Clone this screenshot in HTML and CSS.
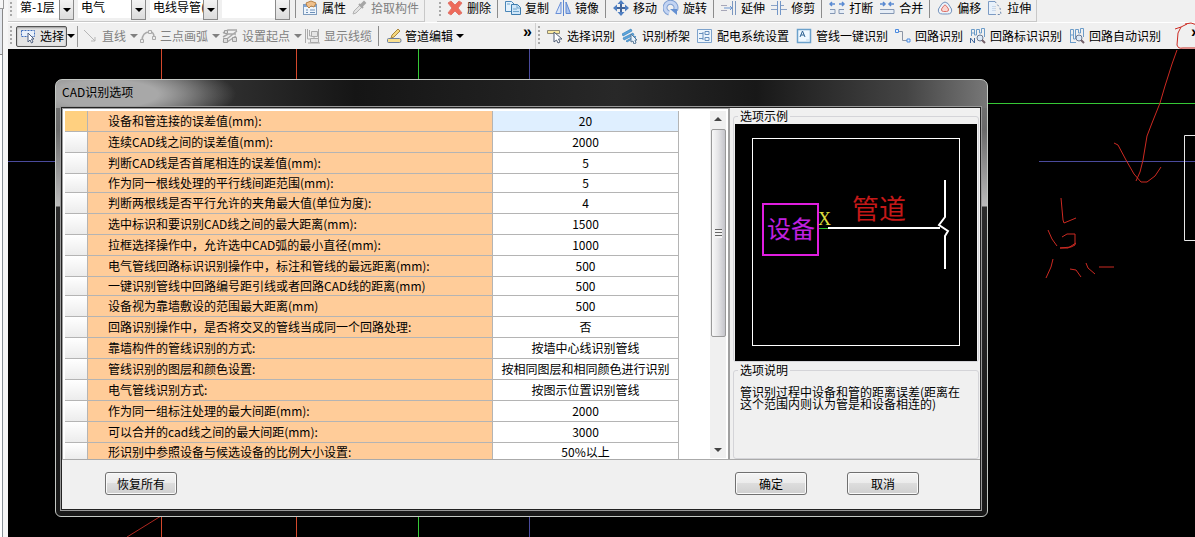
FILE: index.html
```html
<!DOCTYPE html>
<html lang="zh-CN">
<head>
<meta charset="utf-8">
<title>CAD识别选项</title>
<link rel="stylesheet" href="styles.css">
</head>
<body>
<div class="app">
  <aside class="dock"><div class="dock-top"></div><div class="dock-tab"></div><div class="dock-body"></div></aside>
  <div class="main">
    <div class="toolbars">
      <div class="row row-first">
        <div class="bar bar-props">
          <span class="grip"></span>
          <div class="combos">
            <span class="combo combo-small"><select aria-label="楼层"><option>第-1层</option></select></span>
            <span class="combo"><select aria-label="专业"><option>电气</option></select></span>
            <span class="combo"><select aria-label="构件类型"><option>电线导管(电)</option></select></span>
            <span class="combo"><select aria-label="构件"><option></option></select></span>
          </div>
          <span class="sep"></span>
          <button class="tool"><svg class="icon" viewBox="0 0 16 16"><rect x="1.500" y="4.500" width="13" height="10" fill="#eef5fc" stroke="#7f9cbd"/><path d="M2 6h12" stroke="#7fa6d8" stroke-width="2"/><path d="M4 10h2M8 10h5M4 12.500h2M8 12.500h5" stroke="#6c8fb8"/><path d="M4 3l5-2 5 2-2 4-3-1-2 2-2-2z" fill="#efc08c" stroke="#b98448"/></svg>属性</button>
          <button class="tool" disabled><svg class="icon" viewBox="0 0 16 16"><path d="M2 14l1-3 6-6 2 2-6 6z" fill="#e2e2e2" stroke="#b2b2b2"/><path d="M8 4l4 4M10 5l3-3 1 1-3 3" stroke="#a6a6a6" stroke-width="2" fill="none"/></svg>拾取构件</button>
        </div>
        <div class="bar bar-edit">
          <span class="grip"></span>
          <button class="tool"><svg class="icon" viewBox="0 0 16 16"><path d="M1 3l3-2 4 4 4-4 3 2-4 5 4 5-3 2-4-4-4 4-3-2 4-5z" fill="#ee6a5a" stroke="#e0766c"/></svg>删除</button>
          <span class="sep"></span>
          <button class="tool"><svg class="icon" viewBox="0 0 16 16"><path d="M.5 1.500h6l3 3v7h-9z" fill="#e3f1fc" stroke="#4a86b8"/><path d="M6.500 4.500h6l3 3v7h-9z" fill="#cfe6f8" stroke="#3d7cae"/><path d="M12 5v3h3M8 9h4M8 11.500h6M2 4h3" stroke="#6ea4cc" fill="none"/></svg>复制</button>
          <button class="tool"><svg class="icon" viewBox="0 0 16 16"><path d="M8.500 0v16" stroke="#5b86d0"/><path d="M6 2v11.500H.8z" fill="#d9e6fa" stroke="#6a90d8"/><path d="M11 2v11.500h4.500z" fill="#a9c3ee" stroke="#5f88d2"/></svg>镜像</button>
          <span class="sep"></span>
          <button class="tool"><svg class="icon" viewBox="0 0 16 16"><path d="M8 1v14M1 8h14" stroke="#41659c" stroke-width="2"/><path d="M8 0l3.500 4h-7zM8 16l3.500-4h-7zM0 8l4-3.500v7zM16 8l-4-3.500v7z" fill="#4f7fc2"/></svg>移动</button>
          <button class="tool"><svg class="icon" viewBox="0 0 16 16"><path d="M6 13A5.500 5.500 0 1 1 12.500 10" stroke="#7f9fd2" stroke-width="5" fill="none"/><path d="M6 13A5.500 5.500 0 1 1 12.500 10" stroke="#c3d4f2" stroke-width="3" fill="none"/><path d="M7 9h7v6z" fill="#6490d2"/></svg>旋转</button>
          <span class="sep"></span>
          <button class="tool"><svg class="icon" viewBox="0 0 16 16"><path d="M0 5.500h6M0 10.500h6" stroke="#a7a7b8"/><path d="M3 8h8M9 6l2 2-2 2" stroke="#6d97d2" fill="none"/><path d="M11.500 1v14M14.500 1v14" stroke="#7b97c0"/></svg>延伸</button>
          <button class="tool"><svg class="icon" viewBox="0 0 16 16"><path d="M6.500 1v14M9.500 1v14" stroke="#7296c8"/><path d="M0 5.500h6M0 9.500h6M10 5.500h3M10 9.500h6" stroke="#8aa2c6"/></svg>修剪</button>
          <span class="sep"></span>
          <button class="tool"><svg class="icon" viewBox="0 0 16 16"><path d="M1 4h5M3 2L1 4l2 2M10 4h5M13 2l2 2-2 2" stroke="#5a8ad2" stroke-width="1.500" fill="none"/><path d="M1 9.500h5v4H1M15 9.500h-5v4h5" stroke="#8497b4" fill="#e6edf6"/></svg>打断</button>
          <button class="tool"><svg class="icon" viewBox="0 0 16 16"><path d="M1 4h5M4 2l2 2-2 2M10 4h5M12 2l-2 2 2 2" stroke="#5a8ad2" stroke-width="1.500" fill="none"/><path d="M1 9.500h14v4H1" stroke="#8497b4" fill="#e6edf6"/></svg>合并</button>
          <span class="sep"></span>
          <button class="tool"><svg class="icon" viewBox="0 0 16 16"><path d="M1.500 9L5 3.500Q8 .5 11 3.500L14.500 9q1 5-4 5h-5q-5 0-4-5z" fill="#edf3fa" stroke="#7493bd"/><path d="M4.500 9L7 5.500q1-1 2 0L11.500 9q.5 2.500-2 2.500h-3q-2.500 0-2-2.500z" fill="#f9d6d2" stroke="#dd7168"/></svg>偏移</button>
          <button class="tool"><svg class="icon" viewBox="0 0 16 16"><path d="M8 14.500H1.500v-13H8" fill="#e8f1fb" stroke="#7c9bc4"/><path d="M8 1.500L13 8l1 6.500H8" fill="none" stroke="#6b86ad" stroke-dasharray="2 2"/><path d="M6 6v5M8 6v5" stroke="#a9bdd8" stroke-dasharray="1 1"/></svg>拉伸</button>
        </div>
      </div>
      <div class="row row-second">
        <div class="bar bar-draw">
          <span class="grip"></span>
          <div class="select-group">
            <button class="tool tool-pressed"><svg class="icon" viewBox="0 0 16 16"><path d="M1.500 2.500h13v6h-13z" fill="#e8f0fb" stroke="#3f6fbd" stroke-dasharray="2 1"/><path d="M8 5v9l2-2 1.500 3 1.500-1-1.500-3H14z" fill="#fff" stroke="#4d5f80"/></svg>选择</button>
            <button class="drop" aria-label="选择方式"></button>
          </div>
          <div class="draw-group">
            <button class="tool" disabled><svg class="icon" viewBox="0 0 16 16"><path d="M2 2l11 11M9 13h4V9" stroke="#b5b5b5" fill="none"/></svg>直线<i class="arrow"></i></button>
            <button class="tool" disabled><svg class="icon" viewBox="0 0 16 16"><path d="M2 13Q2 4 10 4q4 0 4 5" stroke="#aaa" fill="none" stroke-width="1.500"/><path d="M.5 11.500h3v3h-3zM8.500 2.500h3v3h-3zM12.500 8.500h3v3h-3z" fill="#ededed" stroke="#aaa"/></svg>三点画弧<i class="arrow"></i></button>
            <button class="tool" disabled><svg class="icon" viewBox="0 0 16 16"><path d="M1 5l5-3h9M1 9l5-3h8M1 14L15 3M5 14l9-6" stroke="#a8a8a8" stroke-width="1.500" fill="none"/><path d="M1.500 10.500h4v4h-4zM10.500 9.500h4v4h-4zM2.500 2.500h3v3h-3z" fill="#ddd" stroke="#9d9d9d"/></svg>设置起点<i class="arrow"></i></button>
            <button class="tool" disabled><svg class="icon" viewBox="0 0 16 16"><path d="M1.500 1v14M3.500 1v10h4M5.500 2v6h3" stroke="#aaa" fill="none"/><path d="M7.500 3.500h6v5h-6zM6.500 10.500h8v4h-8zM10 8v3M4 15h12M14.500 1v10" fill="#e5e5e5" stroke="#aaa"/></svg>显示线缆</button>
          </div>
          <span class="sep"></span>
          <button class="tool tool-tight"><svg class="icon" viewBox="0 0 16 16"><path d="M1.500 11.500q0-1 1-1h11q1.500 0 1.500 2t-1.500 2h-11q-1 0-1-1z" fill="#f8df8e" stroke="#6b7fa0"/><path d="M5 10l1-3 6-6 2 2-6 6z" fill="#f5d77c" stroke="#a98640"/></svg>管道编辑<i class="arrow"></i></button>
          <button class="more">»</button>
        </div>
        <div class="bar bar-detect">
          <span class="grip"></span>
          <button class="tool"><svg class="icon" viewBox="0 0 16 16"><path d="M.5 2.500h12v3H.5z" fill="#fae9a0" stroke="#8f8a76"/><path d="M7 4v10l2.500-2 1.500 3 2-1-1.500-3H15z" fill="#fff" stroke="#4f5d74"/></svg>选择识别</button>
          <button class="tool"><svg class="icon" viewBox="0 0 16 16"><path d="M0 6l9-5 1 2-9 5zM1 10l10-5 1 2-10 5zM4 13l9-5 1 1-9 5z" fill="#5ba5dc" stroke="#3b83bd" stroke-width=".7"/><path d="M9 6v8l2-1 1 3 2-1-1-3h2z" fill="#e8f3fc" stroke="#587998"/></svg>识别桥架</button>
          <button class="tool"><svg class="icon" viewBox="0 0 16 16"><path d="M.5 1.500h14v13H.5z" fill="#edf5fc" stroke="#7da2cc"/><path d="M2 5.500h4M2 10.500h4M8 3.500h4v3H8zM8 9.500h4v3H8zM6 4v8" stroke="#668fbd" fill="none"/></svg>配电系统设置</button>
          <button class="tool"><svg class="icon" viewBox="0 0 16 16"><path d="M1.500 1.500h13v13h-13z" fill="#eff8ff" stroke="#6ba1cb" stroke-width="1.500"/><path d="M4 9l2.500-6L9 9M5 7h3" stroke="#2e6292" fill="none"/><path d="M10 12h3" stroke="#c8dced"/></svg>管线一键识别</button>
          <button class="tool"><svg class="icon" viewBox="0 0 16 16"><path d="M3 3.500h4.500v9H13" stroke="#8b95a5" fill="none"/><path d="M.5 1.500h3v3h-3zM12 11h3v3h-3z" fill="#e9f2ff" stroke="#4b8be0"/></svg>回路识别</button>
          <button class="tool"><svg class="icon" viewBox="0 0 16 16"><path d="M1.500 8V1.500h3V7h2V1.500h3V5h2V.5h3V9M1 5h4" stroke="#6c9cc9" fill="none"/><path d="M.5 15v-5l4 5v-5" stroke="#41679a" fill="none"/><circle cx="10" cy="10" r="3" fill="#dceaf8" stroke="#6b7890"/><path d="M12 12l3 3" stroke="#725f68" stroke-width="2"/></svg>回路标识识别</button>
          <button class="tool"><svg class="icon" viewBox="0 0 16 16"><path d="M1.500 15V1.500h3V11h2V1.500h3V5h2V.500h3V9M1 7h4M1 14.500h6" stroke="#6c9cc9" fill="none"/><circle cx="10" cy="10" r="3" fill="#dceaf8" stroke="#6b7890"/><path d="M12 12l3 3" stroke="#725f68" stroke-width="2"/></svg>回路自动识别</button>
          <button class="more more-edge">»</button>
        </div>
      </div>
    </div>

    <div class="canvas">
      <svg class="drawing" aria-hidden="true">
        <path d="M153.500 0v488M288.500 0v488" stroke="#d4482c"/>
        <path d="M119 488l34-21" stroke="#b02820"/>
        <path d="M410.500 0v488M410 54.500h800" stroke="#36c836"/>
        <path d="M521.500 0v488M0 112.500h60M1031 112.500h400" stroke="#4a4a9c"/>
        <path d="M1300 86.500h-123.500v105H1300" stroke="#e8e8e8" fill="none"/>
      </svg>

      <section class="dialog" role="dialog" aria-labelledby="dlg-title">
        <h1 class="dialog-title" id="dlg-title">CAD识别选项</h1>
        <div class="dialog-client">
          <div class="panels">
            <div class="list-panel">
              <table class="options">
                <colgroup><col class="col-head"><col class="col-name"><col class="col-value"></colgroup>
                <tbody>
                <tr class="current"><th></th><td>设备和管连接的误差值(mm):</td><td>20</td></tr>
                <tr><th></th><td>连续CAD线之间的误差值(mm):</td><td>2000</td></tr>
                <tr><th></th><td>判断CAD线是否首尾相连的误差值(mm):</td><td>5</td></tr>
                <tr class="short"><th></th><td>作为同一根线处理的平行线间距范围(mm):</td><td>5</td></tr>
                <tr><th></th><td>判断两根线是否平行允许的夹角最大值(单位为度):</td><td>4</td></tr>
                <tr><th></th><td>选中标识和要识别CAD线之间的最大距离(mm):</td><td>1500</td></tr>
                <tr><th></th><td>拉框选择操作中，允许选中CAD弧的最小直径(mm):</td><td>1000</td></tr>
                <tr><th></th><td>电气管线回路标识识别操作中，标注和管线的最远距离(mm):</td><td>500</td></tr>
                <tr class="short"><th></th><td>一键识别管线中回路编号距引线或者回路CAD线的距离(mm)</td><td>500</td></tr>
                <tr><th></th><td>设备视为靠墙敷设的范围最大距离(mm)</td><td>500</td></tr>
                <tr><th></th><td>回路识别操作中，是否将交叉的管线当成同一个回路处理:</td><td>否</td></tr>
                <tr><th></th><td>靠墙构件的管线识别的方式:</td><td>按墙中心线识别管线</td></tr>
                <tr><th></th><td>管线识别的图层和颜色设置:</td><td>按相同图层和相同颜色进行识别</td></tr>
                <tr><th></th><td>电气管线识别方式:</td><td>按图示位置识别管线</td></tr>
                <tr><th></th><td>作为同一组标注处理的最大间距(mm):</td><td>2000</td></tr>
                <tr><th></th><td>可以合并的cad线之间的最大间距(mm):</td><td>3000</td></tr>
                <tr class="last"><th></th><td>形识别中参照设备与候选设备的比例大小设置:</td><td>50%以上</td></tr>
                </tbody>
              </table>
              <div class="scrollbar">
                <i class="tri tri-up"></i>
                <div class="thumb"><i class="thumb-grip"></i></div>
                <i class="tri tri-down"></i>
              </div>
            </div>
            <div class="side-panel">
              <fieldset class="group group-sample">
                <legend>选项示例</legend>
                <svg class="sample" viewBox="0 0 242 237" role="img" aria-label="选项示例">
                  <rect width="242" height="237" fill="#000"/>
                  <rect x="17.500" y="14.500" width="207" height="207" fill="none" stroke="#fff"/>
                  <rect x="28" y="80" width="55" height="51" fill="none" stroke="#e01ee0" stroke-width="2"/>
                  <text class="t-device" x="32" y="114">设备</text>
                  <text class="t-x" x="83" y="101">X</text>
                  <path d="M84 104.500h9" stroke="#2fc02f"/>
                  <path d="M93 104h112" stroke="#fff" stroke-width="2"/>
                  <path d="M210 56v37l-6 8 9 6-3 5v33" fill="none" stroke="#fff" stroke-width="2"/>
                  <text class="t-pipe" x="117" y="95">管道</text>
                </svg>
              </fieldset>
              <fieldset class="group group-note">
                <legend>选项说明</legend>
                <p>管识别过程中设备和管的距离误差(距离在这个范围内则认为管是和设备相连的)</p>
              </fieldset>
            </div>
          </div>
          <div class="actions">
            <button class="btn">恢复所有</button>
            <div class="confirm"><button class="btn">确定</button><button class="btn">取消</button></div>
          </div>
        </div>
      </section>
    </div>
  </div>
  <svg class="ink" aria-hidden="true">
    <path d="M1175 29l6-2M1187 24l-6 3-3 6-1 12q1 4 6 3h20M1185 24l6-1 6 2M1177 50l-5 14-7 22-5 17-8 20-5 13-4 24-3 12-4 9M1114 143l4 2 8 15 8 14 7 8 6 0 8-6 6-9"/>
    <path d="M1061 198l2 22 1 3 12-5M1048 230l4 9 5 7M1062 237l5-3 8 0 0 11-4 2-11 1M1060 248h8l8-5M1053 259l-2 8-5 11M1070 269l6 1 5 7M1086 263l2 5 7 6M1099 267h15"/>
  </svg>
</div>
</body>
</html>
```
FILE: styles.css
```css
* { box-sizing: border-box; }

body {
  margin: 0;
  font: 12px/16px "Noto Sans CJK SC", sans-serif;
  color: #000;
  background: #f0f0f0;
  overflow: hidden;
}

button, select { font: inherit; color: inherit; }

.app { position: relative; display: flex; height: 100vh; }

.dock { display: flex; flex-direction: column; width: 8px; background: #f6f6f6; }
.dock-top { width: 4px; height: 9px; border-right: 1px solid #999; border-bottom: 1px solid #999; }
.dock-tab { width: 3px; height: 46px; border-right: 1px solid #888; border-bottom: 1px solid #888; background: #e4e8ee; }
.dock-body { flex: 1; width: 3px; border-right: 1px solid #8a9298; background: #fff; }

.main { flex: 1; min-width: 0; display: flex; flex-direction: column; }

/* toolbars */
.toolbars { height: 49px; overflow: hidden; background: #f0f0f0; }
.row { display: flex; height: 28px; }
.row-first { margin-top: -6px; gap: 12px; }
.row-second { height: 27px; border-top: 1px solid #fff; }
.bar { display: flex; align-items: center; gap: 6px; padding: 0 5px 0 2px; white-space: nowrap; }
.row-first .bar { border-right: 1px solid #c8c8c8; border-bottom: 1px solid #c8c8c8; }
.row-first .bar-props { gap: 5px; }
.bar-draw { flex: 0 0 528px; gap: 4px; border-right: 1px solid #d0d0d0; padding-right: 3px; }
.bar-draw .sep { margin: 0 2px; }
.bar-detect { flex: 1; min-width: 0; gap: 7px; padding-right: 0; overflow: hidden; }
.grip { width: 2px; height: 20px; background: repeating-linear-gradient(#a8a8a8 0 2px, transparent 2px 4px); }
.sep { width: 2px; height: 20px; border-left: 1px solid #8c8c8c; }

.combos { display: flex; gap: 4px; }
.combo { position: relative; width: 68px; }
.combo-small { width: 57px; }
.combo select {
  display: block;
  width: 100%;
  height: 20px;
  padding: 0 14px 1px 3px;
  border: 0;
  border-radius: 0;
  background: #fff;
  appearance: none;
}
.combo::before {
  content: "";
  position: absolute;
  right: 0;
  top: 0;
  width: 13px;
  height: 20px;
  border: 1px solid #8a8a8a;
  background: linear-gradient(#f4f4f4, #dcdcdc);
  pointer-events: none;
}
.combo::after {
  content: "";
  position: absolute;
  right: 3px;
  top: 10px;
  border: 4px solid transparent;
  border-top-color: #000;
  border-bottom: 0;
  pointer-events: none;
}

.tool {
  display: flex;
  align-items: center;
  gap: 4px;
  padding: 0;
  border: 0;
  background: none;
  white-space: nowrap;
}
.tool:disabled { color: #808080; }
.tool-tight { gap: 3px; }
.icon { width: 16px; height: 16px; flex: none; }
.arrow { border: 4px solid transparent; border-top-color: currentColor; border-bottom: 0; }
.select-group { display: flex; align-items: center; padding-right: 2px; border-right: 1px solid #999; }
.tool-pressed {
  height: 21px;
  padding: 0 2px 0 3px;
  border: 1px solid #555;
  border-radius: 2px;
  background: #e4e4e4;
  box-shadow: inset 0 1px 2px #999;
}
.drop { width: 7px; padding: 0; border: 4px solid transparent; border-top-color: #000; border-bottom: 0; background: none; }
.draw-group { display: flex; gap: 2px; }
.more { margin-left: auto; padding: 0 0 8px; border: 0; background: none; font: bold 16px/16px "Liberation Sans", sans-serif; }
.more-edge { margin-right: -5px; }

/* drawing area */
.canvas { position: relative; flex: 1; background: #000; overflow: hidden; }
.drawing { position: absolute; inset: 0; width: 100%; height: 100%; }
.ink { position: absolute; inset: 0; width: 100%; height: 100%; pointer-events: none; }
.ink path { fill: none; stroke: #cc2a22; stroke-width: 1; }

/* dialog window */
.dialog {
  position: absolute;
  left: 47px;
  right: 207px;
  top: 30px;
  padding: 0 6px 6px 5px;
  border: 1px solid #c4c8c4;
  border-radius: 7px 7px 6px 6px;
  background:
    radial-gradient(ellipse 130px 34px at 50px 14px, #a8a8a8 0 40%, transparent 100%) no-repeat 0 0 / 100% 28px,
    linear-gradient(to right, #777 0, #333 150px, #151515 300px, #282828 560px, #181818 700px, #444 850px, #777 100%) no-repeat 0 0 / 100% 28px,
    linear-gradient(#777, #6a6a6a 50px, #bbb 126px, #2a2a2a 127px, #181818);
}
.dialog-title { margin: 0; padding: 2px 1px 6px; font-size: 12px; font-weight: 400; line-height: 19px; }
.dialog-client { border: 1px solid #222; outline: 1px solid #999; background: #f0f0f0; }
.panels { display: flex; border-bottom: 1px solid #aaa; }

.list-panel {
  flex: 1;
  min-width: 0;
  display: flex;
  height: 351px;
  padding: 2px 2px 1px;
  border: 1px solid #a0a0a0;
  border-width: 1px 2px 0 1px;
  background: #fff;
  overflow: hidden;
}
.options { width: 614px; height: 0; border-collapse: separate; border-spacing: 0; table-layout: fixed; }
.col-head { width: 23px; }
.col-name { width: 405px; }
.options tr { height: 21px; }
.options .short { height: 19px; }
.options .last { height: 17px; }
.options th, .options td {
  padding: 0;
  border-right: 1px solid #b4b4b4;
  border-bottom: 1px solid #b4b4b4;
  line-height: 16px;
  white-space: nowrap;
}
.options th { background: linear-gradient(#fff, #ececec); }
.options td:nth-child(2) { padding-left: 20px; background: #ffcc99; }
.options td:nth-child(3) { text-align: center; }
.options .last td { border-bottom: 0; }
.options .current th { background: #ffd080; }
.options .current td:nth-child(3) { background: #dfefff; }

.scrollbar { display: flex; flex-direction: column; align-items: center; width: 16px; margin-left: auto; padding: 6px 0; background: #f0f0f0; }
.tri { border: 4px solid transparent; }
.tri-up { border-top: 0; border-bottom-color: #444; }
.tri-down { border-bottom: 0; border-top-color: #444; margin-top: auto; }
.thumb {
  display: flex;
  align-items: center;
  justify-content: center;
  width: 15px;
  height: 208px;
  margin-top: 8px;
  border: 1px solid #999;
  border-radius: 2px;
  background: linear-gradient(to right, #f8f8f8, #e6e6e8 45%, #c4c4ca);
}
.thumb-grip { width: 7px; height: 9px; background: repeating-linear-gradient(#666 0 1px, #f4f4f4 1px 3px); }

.side-panel { flex: 0 0 250px; display: flex; flex-direction: column; padding: 0 1px 0 3px; }
.group { min-width: 0; margin: 0; border: 1px solid #d4d4d8; border-radius: 3px; }
.group legend { margin-left: 3px; padding: 0 2px; line-height: 16px; }
.group-sample { padding: 0 1px; }
.group-note { flex: 1; padding: 8px 10px 0 6px; }
.group-note legend { margin-left: -2px; }
.group-note p { margin: 0; line-height: 12px; }
.sample { display: block; width: 100%; }
.t-device { font-size: 24px; fill: #c020e0; }
.t-pipe { font-size: 27px; fill: #c41818; }
.t-x { font: 18px "Liberation Serif", serif; fill: #e0e040; }

.actions { display: flex; justify-content: space-between; padding: 12px 61px 14px 43px; }
.confirm { display: flex; gap: 40px; }
.btn {
  width: 72px;
  height: 23px;
  padding: 0;
  border: 1px solid #707070;
  border-radius: 3px;
  background: linear-gradient(#f4f4f4, #ebebeb 49%, #dddddd 50%, #cfcfcf);
  box-shadow: inset 0 0 0 1px #fafafa;
}
```
